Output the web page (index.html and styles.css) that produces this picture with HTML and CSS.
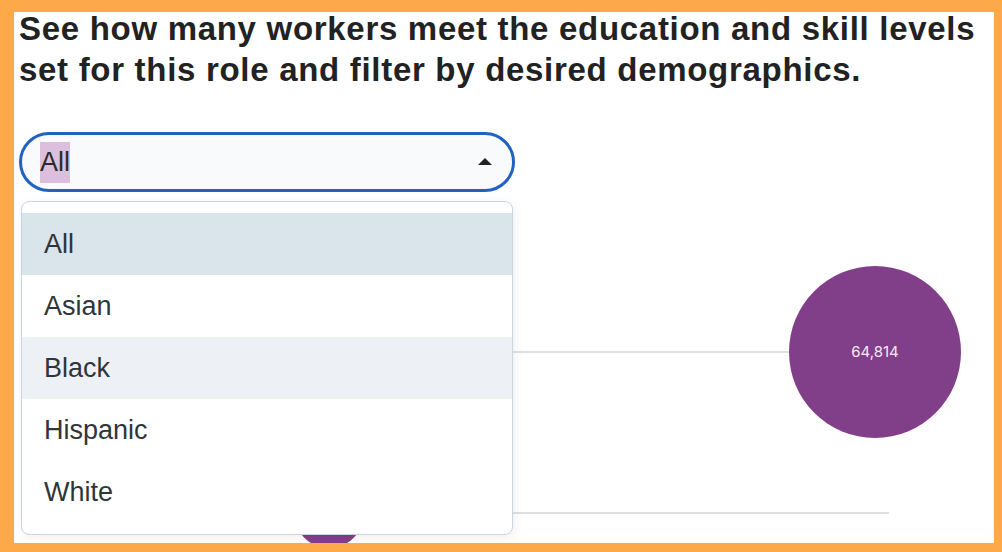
FILE: index.html
```html
<!DOCTYPE html>
<html lang="en">
<head>
  <meta charset="UTF-8" />
  <meta name="viewport" content="width=device-width, initial-scale=1" />
  <title>Workers by demographics</title>
  <link rel="stylesheet" href="styles.css">
</head>
<body>
  <div class="page">
    <h1 class="title">See how many workers meet the education and skill levels set for this role and filter by desired demographics.</h1>

    <div class="field">
      <div class="select">
        <span class="select-value">All</span>
        <svg class="caret" width="14" height="7" viewBox="0 0 14 7"><path d="M0 7 L7 0 L14 7 Z" fill="#222"/></svg>
      </div>

      <ul class="menu">
        <li class="option selected">All</li>
        <li class="option">Asian</li>
        <li class="option hover">Black</li>
        <li class="option">Hispanic</li>
        <li class="option">White</li>
      </ul>
    </div>

    <div class="chart">
      <div class="row">
        <div class="track"></div>
        <div class="bubble" style="left: 770px; width: 172px; height: 172px;">64,814</div>
      </div>
      <div class="row">
        <div class="track"></div>
        <div class="bubble" style="left: 275px; width: 70px; height: 70px;"></div>
      </div>
    </div>
  </div>
</body>
</html>
```

FILE: styles.css
```css
html, body {
  margin: 0;
  height: 100%;
}

body {
  background-color: #fda94a;
  font-family: "Liberation Sans", Arial, sans-serif;
  overflow: hidden;
}

.page {
  margin: 12px 8px 0 14px;
  height: 531px;
  padding-left: 5px;
  background-color: #fff;
  overflow: hidden;
  box-sizing: border-box;
}

.title {
  margin: -4px 0 42px 0;
  padding-right: 4px;
  font-size: 33px;
  line-height: 41px;
  letter-spacing: 0.7px;
  font-weight: 700;
  color: #222;
}

.field {
  position: relative;
  width: 496px;
  z-index: 2;
}

.select {
  display: flex;
  justify-content: space-between;
  align-items: center;
  height: 60px;
  padding: 0 20px 0 18px;
  border: 3px solid #1f62c3;
  border-radius: 30px;
  background-color: #f9fafc;
  box-sizing: border-box;
}

.select-value {
  font-size: 27px;
  line-height: 41px;
  color: #2b2b2b;
  background-color: #dcbfdc;
}

.caret {
  display: block;
  margin-top: -2px;
}

.menu {
  position: absolute;
  top: 69px;
  left: 2px;
  width: 492px;
  margin: 0;
  padding: 11px 0;
  list-style: none;
  background-color: #fff;
  border: 1px solid #cbd5df;
  border-radius: 8px;
  box-shadow: 2px 3px 12px rgba(0, 0, 0, 0.06);
  box-sizing: border-box;
}

.option {
  height: 62px;
  line-height: 62px;
  padding-left: 22px;
  font-size: 27px;
  color: #30353a;
}

.option.selected {
  background-color: #d9e4eb;
}

.option.hover {
  background-color: #edf1f5;
}

.chart {
  padding-top: 79px;
}

.row {
  position: relative;
  height: 161px;
  display: flex;
  align-items: center;
}

.track {
  margin-left: 2px;
  width: 868px;
  height: 2px;
  background-color: #e0e0e0;
}

.bubble {
  position: absolute;
  top: 50%;
  transform: translateY(-50%);
  display: flex;
  justify-content: center;
  align-items: center;
  border-radius: 50%;
  background-color: #823f89;
  color: #f3eaf3;
  font-family: Inter, "Noto Sans", sans-serif;
  font-size: 15px;
}
```
